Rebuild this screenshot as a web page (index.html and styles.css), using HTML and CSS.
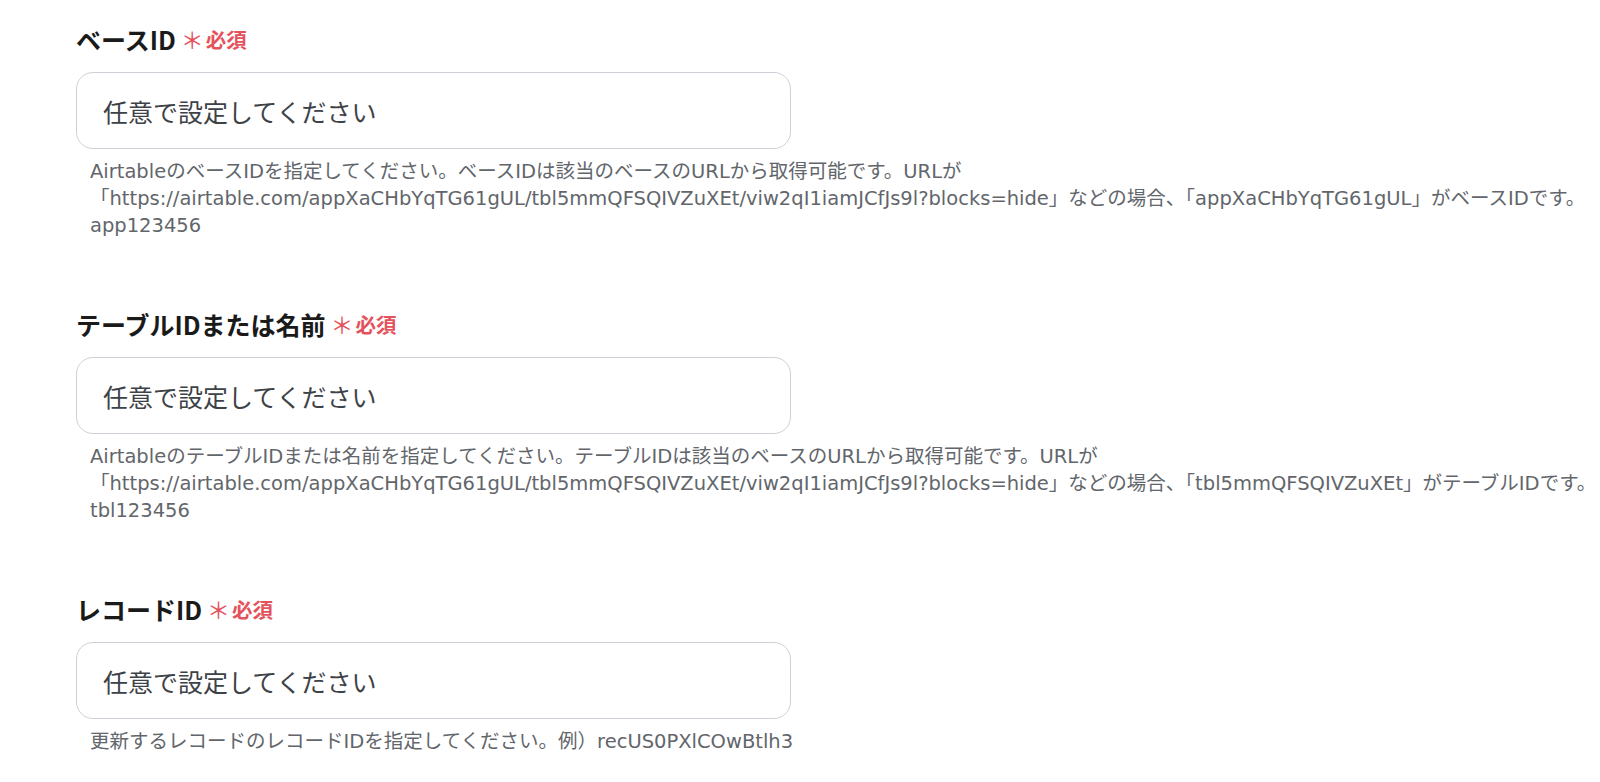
FILE: index.html
```
<!DOCTYPE html>
<html lang="ja">
<head>
<meta charset="utf-8">
<title>Airtable設定</title>
<link rel="stylesheet" href="styles.css">
</head>
<body>
<main class="form">
  <section class="field">
    <div class="label"><span class="label-text">ベースID</span><span class="req-mark">＊</span><span class="req-text">必須</span></div>
    <input class="input" type="text" placeholder="任意で設定してください">
    <p class="help"><span class="line">AirtableのベースIDを指定してください。ベースIDは該当のベースのURLから取得可能です。URLが</span><span class="line">「https://airtable.com/appXaCHbYqTG61gUL/tbl5mmQFSQIVZuXEt/viw2qI1iamJCfJs9l?blocks=hide」などの場合、「appXaCHbYqTG61gUL」がベースIDです。</span><span class="line">app123456</span></p>
  </section>
  <section class="field">
    <div class="label"><span class="label-text">テーブルIDまたは名前</span><span class="req-mark">＊</span><span class="req-text">必須</span></div>
    <input class="input" type="text" placeholder="任意で設定してください">
    <p class="help"><span class="line">AirtableのテーブルIDまたは名前を指定してください。テーブルIDは該当のベースのURLから取得可能です。URLが</span><span class="line">「https://airtable.com/appXaCHbYqTG61gUL/tbl5mmQFSQIVZuXEt/viw2qI1iamJCfJs9l?blocks=hide」などの場合、「tbl5mmQFSQIVZuXEt」がテーブルIDです。</span><span class="line">tbl123456</span></p>
  </section>
  <section class="field">
    <div class="label"><span class="label-text">レコードID</span><span class="req-mark">＊</span><span class="req-text">必須</span></div>
    <input class="input" type="text" placeholder="任意で設定してください">
    <p class="help"><span class="line">更新するレコードのレコードIDを指定してください。例）recUS0PXlCOwBtlh3</span></p>
  </section>
</main>
</body>
</html>
```
FILE: styles.css
```
html, body {
  margin: 0;
  padding: 0;
  background: #ffffff;
  overflow: hidden;
}

body {
  font-family: "Noto Sans CJK JP", "Noto Sans", sans-serif;
  color: #1f1f1f;
}

.form {
  display: flex;
  flex-direction: column;
  gap: 70px;
  padding: 24px 0 0 76px;
}

.field {
  display: flex;
  flex-direction: column;
  align-items: flex-start;
}

.label {
  display: flex;
  align-items: center;
  height: 30px;
  line-height: 30px;
  margin-bottom: 18px;
  white-space: nowrap;
}

.label-text {
  font-size: 25px;
  font-weight: 700;
  color: #1a1a1a;
}

.req-mark {
  margin-left: 5px;
  font-size: 23px;
  font-weight: 400;
  color: #e4525c;
}

.req-text {
  margin-left: 2px;
  font-size: 20.5px;
  font-weight: 700;
  color: #e4525c;
}

.input {
  box-sizing: border-box;
  width: 715px;
  height: 77px;
  margin: 0;
  padding: 0 26px;
  border: 1.5px solid #cdd2d8;
  border-radius: 17px;
  background: #ffffff;
  font-family: "Noto Sans CJK JP", "Noto Sans", sans-serif;
  font-size: 25px;
  color: #333333;
  outline: none;
}

.input::placeholder {
  color: #3d4247;
  opacity: 1;
}

.help {
  margin: 9px 0 0 14px;
  font-family: "DejaVu Sans", "Noto Sans CJK JP", sans-serif;
  font-size: 19.5px;
  line-height: 27px;
  color: #62666b;
  white-space: nowrap;
}

.line {
  display: block;
}
```
